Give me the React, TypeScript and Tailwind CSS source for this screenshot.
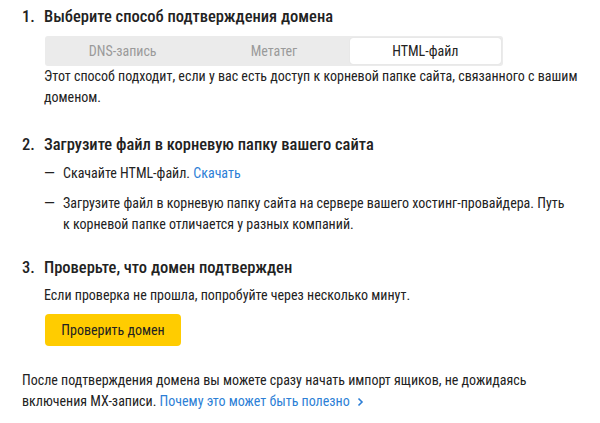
export default function App() {
  return (
    <div className="w-[600px] h-[423px] bg-white text-[#222] font-['Roboto_Condensed','Roboto',sans-serif] pt-[5px]">
      <section className="pl-[22px]">
        <h2 className="flex items-center h-[24px] text-[16.5px] font-medium">
          <span className="w-[22px]">1.</span>
          <span>Выберите способ подтверждения домена</span>
        </h2>
        <div className="ml-[23px] mt-[7px] w-[458px] h-[30px] bg-[#ebebeb] rounded-[3px] p-[2px] grid grid-cols-3 text-[14px]">
          <div className="flex items-center justify-center text-[#9a9a9a]">DNS-запись</div>
          <div className="flex items-center justify-center text-[#9a9a9a]">Метатег</div>
          <div className="flex items-center justify-center bg-white rounded-[3px] shadow-[0_0_1px_rgba(0,0,0,0.15)] text-[#222]">
            HTML-файл
          </div>
        </div>
        <p className="ml-[22px] w-[548px] text-[14px] leading-[21px]">
          Этот способ подходит, если у вас есть доступ к корневой папке сайта, связанного с вашим доменом.
        </p>
      </section>

      <section className="pl-[22px] mt-[25px]">
        <h2 className="flex items-center h-[24px] text-[16.5px] font-medium">
          <span className="w-[22px]">2.</span>
          <span>Загрузите файл в корневую папку вашего сайта</span>
        </h2>
        <div className="ml-[22px] mt-[6px] text-[14px] leading-[21px]">
          <div className="flex">
            <span className="w-[19px] shrink-0 font-['Roboto',sans-serif]">—</span>
            <span>
              Скачайте HTML-файл. <a className="text-[#2d7fd6]">Скачать</a>
            </span>
          </div>
          <div className="flex mt-[9px]">
            <span className="w-[19px] shrink-0 font-['Roboto',sans-serif]">—</span>
            <span className="w-[507px]">
              Загрузите файл в корневую папку сайта на сервере вашего хостинг-провайдера. Путь к корневой папке отличается у разных компаний.
            </span>
          </div>
        </div>
      </section>

      <section className="pl-[22px] mt-[21px]">
        <h2 className="flex items-center h-[24px] text-[16.5px] font-medium">
          <span className="w-[22px]">3.</span>
          <span>Проверьте, что домен подтвержден</span>
        </h2>
        <p className="ml-[22px] mt-[5px] text-[14px] leading-[21px]">
          Если проверка не прошла, попробуйте через несколько минут.
        </p>
        <button className="ml-[23px] mt-[8px] w-[136px] h-[32px] bg-[#ffcc00] rounded-[4px] text-[14px] text-[#222]">
          Проверить домен
        </button>
      </section>

      <p className="pl-[22px] mt-[24px] w-[562px] text-[14px] leading-[21px]">
        <span className="block w-[540px]">
          После подтверждения домена вы можете сразу начать импорт ящиков, не дожидаясь включения MX-записи.{' '}
          <a className="text-[#2d7fd6]">
            Почему это может быть полезно
            <svg width="10" height="10" viewBox="0 0 10 10" className="inline-block ml-[5px] align-[-1px]">
              <path d="M3.5 1.5 L7 5 L3.5 8.5" fill="none" stroke="#2d7fd6" strokeWidth="1.6" />
            </svg>
          </a>
        </span>
      </p>
    </div>
  )
}
